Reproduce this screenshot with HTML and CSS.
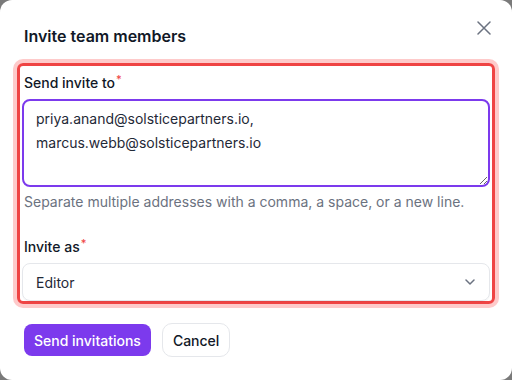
FILE: index.html
```html
<!DOCTYPE html>
<html lang="en">
<head>
    <meta charset="UTF-8">
    <meta name="viewport" content="width=device-width, initial-scale=1.0">
    <title>Invite team members</title>
    <link rel="stylesheet" href="styles.css">
</head>
<body>
    <div class="dialog">
        <h2 class="dialog-title">Invite team members</h2>
        <button class="close-button" aria-label="Close">
            <svg width="14" height="14" viewBox="0 0 14 14" fill="none" stroke="currentColor" stroke-width="1.5" stroke-linecap="round">
                <path d="M1 1L13 13M13 1L1 13"/>
            </svg>
        </button>

        <div class="field-group">
            <label class="label" for="emails">Send invite to<span class="required">*</span></label>
            <textarea id="emails" class="textarea">priya.anand@solsticepartners.io,
marcus.webb@solsticepartners.io</textarea>
            <p class="hint">Separate multiple addresses with a comma, a space, or a new line.</p>

            <label class="label label-spaced">Invite as<span class="required">*</span></label>
            <div class="select">
                <span>Editor</span>
                <svg width="10" height="6" viewBox="0 0 10 6" fill="none" stroke="currentColor" stroke-width="1.5" stroke-linecap="round" stroke-linejoin="round">
                    <path d="M1 1L5 5L9 1"/>
                </svg>
            </div>
        </div>

        <div class="actions">
            <button class="button button-primary">Send invitations</button>
            <button class="button button-secondary">Cancel</button>
        </div>
    </div>
</body>
</html>
```

FILE: styles.css
```css
body {
    margin: 0;
    background-color: #7a7a7a;
    font-family: Inter, "Noto Sans", sans-serif;
    color: #111827;
}

.dialog {
    position: relative;
    box-sizing: border-box;
    width: 512px;
    height: 380px;
    padding: 24px 24px 0;
    background-color: white;
    border-radius: 12px;
}

.dialog-title {
    margin: 0;
    font-size: 16px;
    line-height: 24px;
    font-weight: 600;
}

.close-button {
    position: absolute;
    top: 21px;
    right: 21px;
    padding: 0;
    border: none;
    background: none;
    color: #6b7280;
    display: flex;
    cursor: pointer;
}

.field-group {
    margin: 15px -7px 0;
    padding: 3px 2px 0;
    border: 3px solid #ef4444;
    border-radius: 6px;
    box-shadow: 0 0 0 4px #fecaca;
    display: flex;
    flex-direction: column;
}

.label {
    display: block;
    padding-left: 2px;
    font-size: 14px;
    line-height: 20px;
    font-weight: 500;
}

.label-spaced {
    margin-top: 21px;
}

.required {
    color: #ef4444;
    font-size: 11px;
    vertical-align: 5px;
    margin-left: 1px;
}

.textarea {
    margin-top: 6px;
    box-sizing: border-box;
    width: 100%;
    height: 88px;
    padding: 6px 12px;
    border: 2px solid #7c3aed;
    border-radius: 8px;
    font-family: inherit;
    font-size: 14px;
    line-height: 24px;
    color: #1f2937;
    outline: none;
}

.hint {
    margin: 5px 0 0;
    padding-left: 2px;
    font-size: 14px;
    line-height: 20px;
    color: #6b7280;
}

.select {
    margin-top: 6px;
    box-sizing: border-box;
    height: 38px;
    padding: 0 14px 0 13px;
    border: 1px solid #e5e7eb;
    border-radius: 8px;
    box-shadow: 0 1px 1px rgba(0, 0, 0, 0.04);
    display: flex;
    align-items: center;
    justify-content: space-between;
    font-size: 14px;
    color: #1f2937;
}

.select svg {
    color: #6b7280;
}

.actions {
    margin-top: 19px;
    display: flex;
    align-items: center;
    gap: 11px;
}

.button {
    font-family: inherit;
    font-size: 14px;
    font-weight: 500;
    padding: 0 10px;
    cursor: pointer;
}

.button-primary {
    height: 32px;
    border: none;
    border-radius: 8px;
    background-color: #7c3aed;
    color: white;
}

.button-secondary {
    height: 34px;
    border: 1px solid #e5e7eb;
    border-radius: 10px;
    background-color: white;
    color: #111827;
}
```
